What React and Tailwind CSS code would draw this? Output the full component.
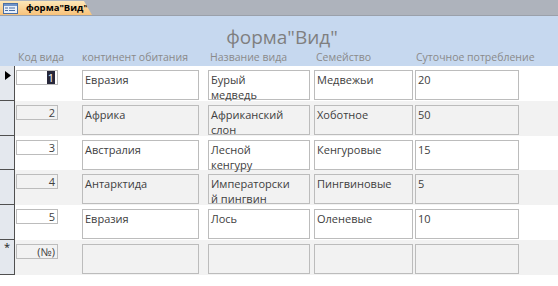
import React from "react";

const rows = [
  { id: "1", cont: "Евразия", name: ["Бурый", "медведь"], fam: "Медвежьи", food: "20", sel: "arrow" },
  { id: "2", cont: "Африка", name: ["Африканский", "слон"], fam: "Хоботное", food: "50" },
  { id: "3", cont: "Австралия", name: ["Лесной", "кенгуру"], fam: "Кенгуровые", food: "15" },
  { id: "4", cont: "Антарктида", name: ["Императорски", "й пингвин"], fam: "Пингвиновые", food: "5" },
  { id: "5", cont: "Евразия", name: ["Лось"], fam: "Оленевые", food: "10" },
  { id: "(№)", cont: "", name: [], fam: "", food: "", sel: "new" },
];

function FormIcon() {
  return (
    <svg width="15" height="11" viewBox="0 0 15 11">
      <rect x="0.5" y="0.5" width="14" height="10" fill="#e8f0fb" stroke="#4a6fa5" />
      <rect x="1" y="1" width="13" height="2" fill="#6f93c8" />
      <rect x="2" y="4.5" width="3" height="1" fill="#4a6fa5" />
      <rect x="6" y="4.5" width="6" height="1" fill="#4a6fa5" />
      <rect x="2" y="7" width="3" height="1" fill="#4a6fa5" />
      <rect x="6" y="7" width="6" height="1" fill="#4a6fa5" />
    </svg>
  );
}

function Row({ r, i }) {
  const gray = i % 2 === 1;
  const bg = gray ? "bg-[#f2f2f2]" : "bg-white";
  const box = `h-[30px] border border-[#bcbcbc] px-[2px] pt-[1px] leading-[15px] ${bg}`;
  return (
    <div className={`flex h-[34.8px] ${bg}`}>
      <div className="relative w-[15px] shrink-0 bg-[#e4e8ee] border-r border-b border-[#505050]">
        {r.sel === "arrow" && (
          <svg className="absolute left-[5px] top-[5px]" width="6" height="9" viewBox="0 0 6 9">
            <path d="M0 0 L6 4.5 L0 9 Z" fill="#000" />
          </svg>
        )}
        {r.sel === "new" && (
          <span className="absolute left-[4px] top-[1px] text-[11px] leading-none text-[#202020]">*</span>
        )}
      </div>
      <div className="ml-[1px] mt-[4px] w-[42px] shrink-0">
        <div className={`h-[15px] border border-[#bcbcbc] pr-[2px] text-right leading-[13px] ${bg}`}>
          {r.sel === "arrow" ? (
            <span className="inline-block bg-[#27273a] px-[1px] text-white">{r.id}</span>
          ) : (
            r.id
          )}
        </div>
      </div>
      <div className={`ml-[24px] mt-[4px] w-[117px] shrink-0 ${box}`}>{r.cont}</div>
      <div className={`ml-[9px] mt-[4px] w-[102px] shrink-0 ${box}`}>
        {r.name.map((l, k) => (
          <div key={k} className="whitespace-nowrap">{l}</div>
        ))}
      </div>
      <div className={`ml-[4px] mt-[4px] w-[99px] shrink-0 ${box}`}>{r.fam}</div>
      <div className={`ml-[2px] mt-[4px] w-[104px] shrink-0 ${box}`}>{r.food}</div>
    </div>
  );
}

export default function App() {
  return (
    <div className="w-[558px] h-[286px] overflow-hidden bg-white text-[11px] text-[#404040] font-['Open_Sans',sans-serif]">
      <div className="h-[16px] bg-[#aeb3bc] border-b border-[#9aa0aa] flex items-end">
        <div className="h-[14px] w-[92px] flex items-center gap-[8px] pl-[3px] bg-gradient-to-b from-[#fde7b8] to-[#f7c27a] [clip-path:polygon(0_0,84px_0,92px_100%,0_100%)]">
          <FormIcon />
          <span className="text-[9.5px] font-bold text-black leading-none whitespace-nowrap">форма"Вид"</span>
        </div>
      </div>
      <div className="h-[50px] bg-[#c6d8ef] flex flex-col">
        <div className="h-[33px] flex items-end justify-center pl-[6px] text-[19px] leading-[24px] text-[#7f7f7f]">
          форма"Вид"
        </div>
        <div className="flex pt-[1px] text-[10.5px] text-[#8a8a8a] whitespace-nowrap">
          <div className="w-[18px] shrink-0" />
          <div className="w-[64px] shrink-0">Код вида</div>
          <div className="w-[128px] shrink-0">континент обитания</div>
          <div className="w-[106px] shrink-0">Название вида</div>
          <div className="w-[100px] shrink-0">Семейство</div>
          <div>Суточное потребление</div>
        </div>
      </div>
      {rows.map((r, i) => (
        <Row key={i} r={r} i={i} />
      ))}
    </div>
  );
}
